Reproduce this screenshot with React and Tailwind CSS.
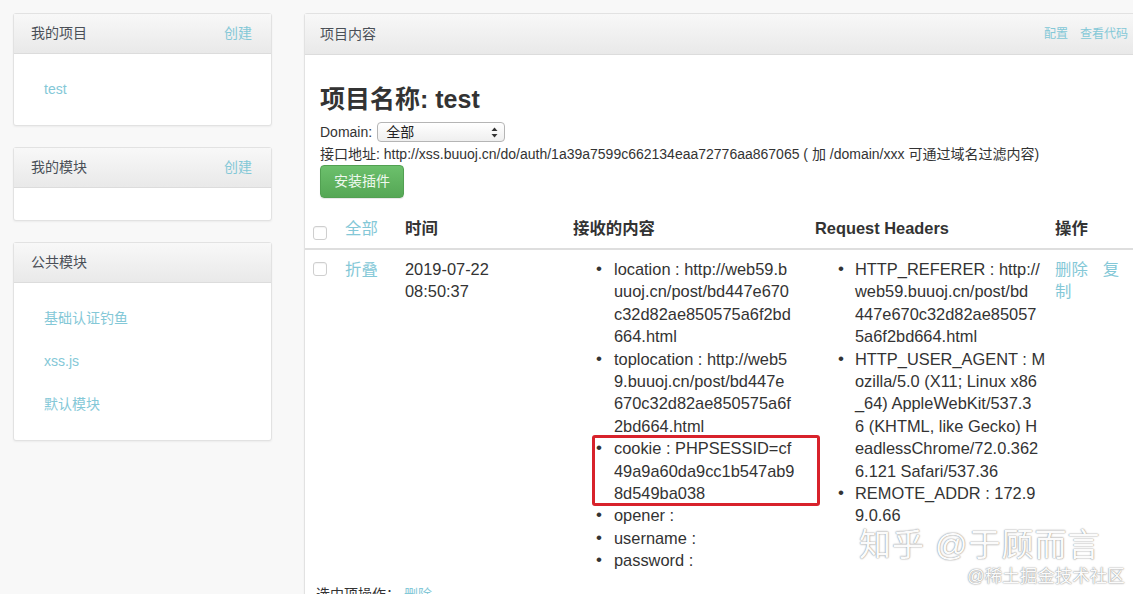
import React from "react";

const LINK = "text-[#84c8d7]";

function SideCard({ title, action, children, bodyClass }) {
  return (
    <div className="rounded-[3px] border border-[#e2e2e2] bg-white shadow-[0_1px_2px_rgba(0,0,0,0.05)]">
      <div className="flex h-[40px] items-center justify-between border-b border-[#dcdcdc] bg-linear-to-b from-[#f8f8f8] to-[#e9e9e9] px-[17px] text-[14px] text-[#4a4f57]">
        <span>{title}</span>
        {action && <span className={`${LINK} pr-[2px]`}>{action}</span>}
      </div>
      <div className={bodyClass}>{children}</div>
    </div>
  );
}

function Check({ className = "" }) {
  return (
    <div
      className={`h-[14px] w-[14px] rounded-[3px] border border-[#cfcfcf] bg-white shadow-[inset_0_1px_1px_rgba(0,0,0,0.05)] ${className}`}
    />
  );
}

function Item({ lines, children, bulletPad = "pl-[2px]" }) {
  return (
    <li className="relative flex">
      <span className={`w-[20px] shrink-0 ${bulletPad} text-[17px] leading-[22.4px]`}>•</span>
      <div>
        {lines.map((l, i) => (
          <span key={i} className="block whitespace-nowrap">
            {l}
          </span>
        ))}
      </div>
      {children}
    </li>
  );
}

export default function App() {
  const content = [
    ["location : http://web59.b", "uuoj.cn/post/bd447e670", "c32d82ae850575a6f2bd", "664.html"],
    ["toplocation : http://web5", "9.buuoj.cn/post/bd447e", "670c32d82ae850575a6f", "2bd664.html"],
  ];
  const headers = [
    ["HTTP_REFERER : http://", "web59.buuoj.cn/post/bd", "447e670c32d82ae85057", "5a6f2bd664.html"],
    [
      "HTTP_USER_AGENT : M",
      "ozilla/5.0 (X11; Linux x86",
      "_64) AppleWebKit/537.3",
      "6 (KHTML, like Gecko) H",
      "eadlessChrome/72.0.362",
      "6.121 Safari/537.36",
    ],
    ["REMOTE_ADDR : 172.9", "9.0.66"],
  ];

  return (
    <div className="relative h-[594px] w-[1133px] overflow-hidden bg-[#f8f8f8] font-['Liberation_Sans','Noto_Sans_CJK_SC',sans-serif] text-[#333]">
      <div className="flex gap-[32px] pl-[13px] pt-[13px]">
        {/* Sidebar */}
        <div className="flex w-[259px] shrink-0 flex-col gap-[21px]">
          <SideCard title="我的项目" action="创建" bodyClass="flex h-[71px] items-center pl-[30px] text-[14px]">
            <span className={LINK}>test</span>
          </SideCard>
          <SideCard title="我的模块" action="创建" bodyClass="h-[32px]" />
          <SideCard title="公共模块" bodyClass="flex flex-col gap-[21px] pt-[24px] pb-[25px] pl-[30px] text-[14px] leading-[22px]">
            <span className={LINK}>基础认证钓鱼</span>
            <span className={LINK}>xss.js</span>
            <span className={LINK}>默认模块</span>
          </SideCard>
        </div>

        {/* Main panel */}
        <div className="w-[840px] shrink-0 rounded-[3px] border border-[#e2e2e2] bg-white shadow-[0_1px_2px_rgba(0,0,0,0.05)]">
          <div className="flex h-[41px] items-center justify-between border-b border-[#dcdcdc] bg-linear-to-b from-[#f8f8f8] to-[#e9e9e9] px-[15px] text-[14px] text-[#4a4f57]">
            <span>项目内容</span>
            <div className={`flex gap-[12px] text-[12px] ${LINK}`}>
              <span>配置</span>
              <span>查看代码</span>
            </div>
          </div>

          <div className="px-[15px] pt-[29px]">
            <h2 className="text-[25px] font-bold leading-[30px] text-[#333]">项目名称: test</h2>
            <div className="mt-[7px] flex h-[22px] items-center text-[14px]">
              <span>Domain:</span>
              <div className="ml-[5px] flex h-[20px] w-[128px] items-center justify-between rounded-[4px] border border-[#b5b5b5] bg-linear-to-b from-[#ffffff] to-[#efefef] pl-[8px] pr-[6px] text-[14px] text-[#222]">
                <span>全部</span>
                <svg width="7" height="11" viewBox="0 0 7 11">
                  <path d="M3.5 0.5 L6.5 4 L0.5 4 Z" fill="#333" />
                  <path d="M3.5 10.5 L6.5 7 L0.5 7 Z" fill="#333" />
                </svg>
              </div>
            </div>
            <div className="h-[22px] text-[14px] leading-[22px] whitespace-nowrap">
              接口地址: http://xss.buuoj.cn/do/auth/1a39a7599c662134eaa72776aa867065 ( 加 /domain/xxx 可通过域名过滤内容)
            </div>
            <div className="flex h-[33px] w-[84px] items-center justify-center rounded-[4px] border border-[#52a052] bg-linear-to-b from-[#6cc06c] to-[#55a755] text-[14px] text-[#eef8ee] shadow-[0_1px_1px_rgba(0,0,0,0.1)]">
              安装插件
            </div>
          </div>

          {/* Table */}
          <div className="mt-[11px] text-[16.4px] leading-[22.4px]">
            <div className="grid grid-cols-[40px_60px_168px_242px_240px_1fr] items-start border-b-2 border-[#dedede] py-[8px] font-bold">
              <div className="pl-[8px] pt-[9px]">
                <Check />
              </div>
              <span className={`font-normal ${LINK}`}>全部</span>
              <span>时间</span>
              <span>接收的内容</span>
              <span>Request Headers</span>
              <span>操作</span>
            </div>

            <div className="grid grid-cols-[40px_60px_168px_242px_240px_1fr] items-start py-[8px]">
              <div className="pl-[8px] pt-[4px]">
                <Check />
              </div>
              <span className={LINK}>折叠</span>
              <div>
                <div>2019-07-22</div>
                <div>08:50:37</div>
              </div>
              <ul className="pl-[21px]">
                {content.map((l, i) => (
                  <Item key={i} lines={l} />
                ))}
                <Item lines={["cookie : PHPSESSID=cf", "49a9a60da9cc1b547ab9", "8d549ba038"]}>
                  <div className="pointer-events-none absolute -top-[2px] -bottom-[2px] -left-[2px] w-[228px] rounded-[3px] border-[3px] border-[#d8222b]" />
                </Item>
                <Item lines={["opener :"]} />
                <Item lines={["username :"]} />
                <Item lines={["password :"]} />
              </ul>
              <ul className="pl-[20px]">
                {headers.map((l, i) => (
                  <Item key={i} lines={l} bulletPad="pl-[3px]" />
                ))}
              </ul>
              <div className={LINK}>
                <div className="flex gap-[15px]">
                  <span>删除</span>
                  <span>复</span>
                </div>
                <div>制</div>
              </div>
            </div>

            <div className="pl-[11px] pt-[3px] text-[14px]">
              选中项操作： <span className={LINK}>删除</span>
            </div>
          </div>
        </div>
      </div>

      {/* Watermarks */}
      <div className="absolute left-[859px] top-[529px] text-[32px] leading-none tracking-[1px] text-[#fbfbfb] [text-shadow:0_0_1px_#8a8a8a,0_0_2px_#aaaaaa]">
        知乎 @于顾而言
      </div>
      <div className="absolute left-[967px] top-[568px] text-[17.5px] leading-none text-[#fbfbfb] [text-shadow:0_0_1px_#8a8a8a,0_0_2px_#aaaaaa]">
        @稀土掘金技术社区
      </div>
    </div>
  );
}
